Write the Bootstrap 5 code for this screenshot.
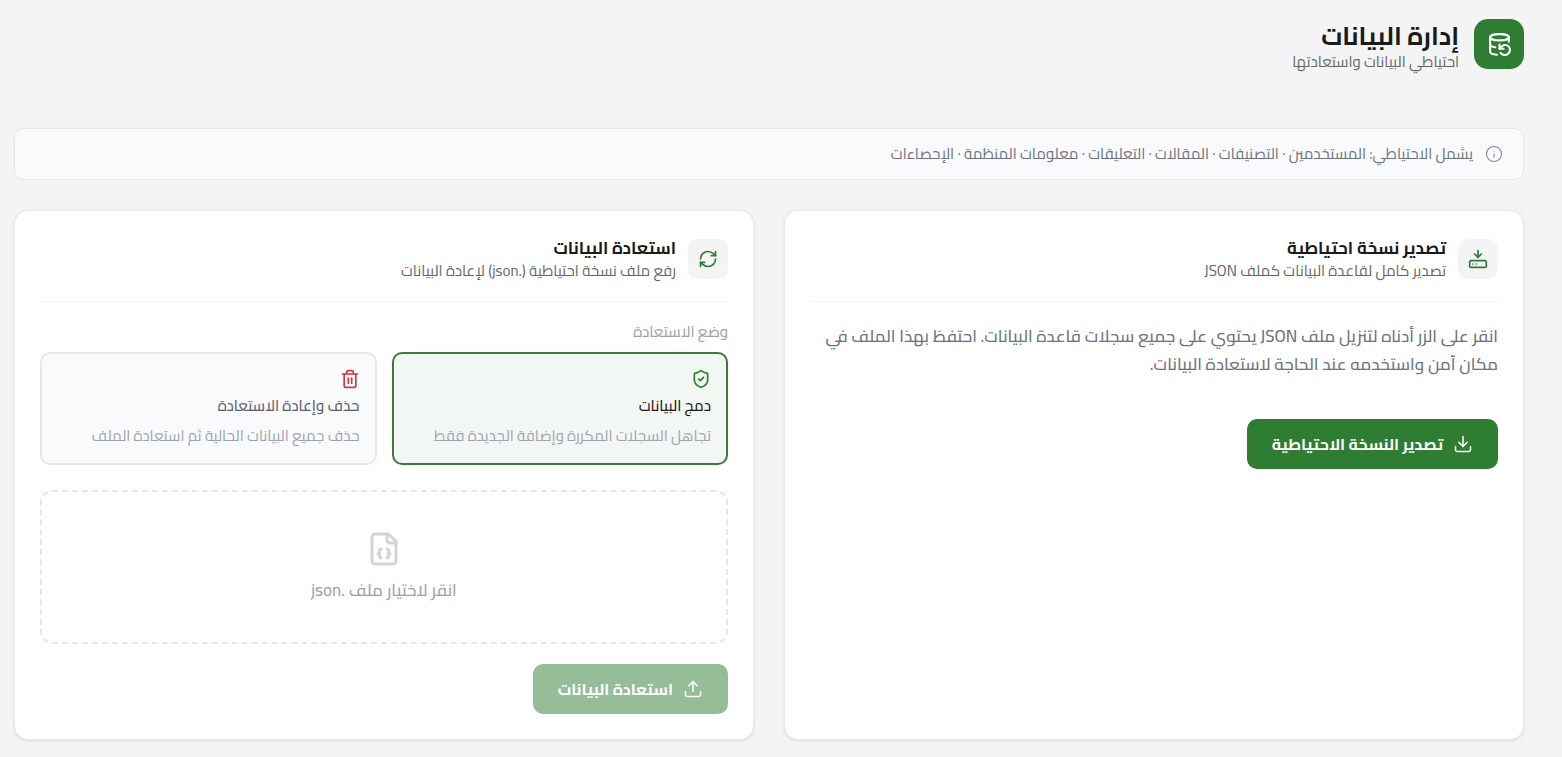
<!DOCTYPE html>
<html lang="ar" dir="rtl">
<head>
<meta charset="utf-8">
<meta name="viewport" content="width=device-width, initial-scale=1">
<title>إدارة البيانات</title>
<link href="https://cdn.jsdelivr.net/npm/bootstrap@5.3.0/dist/css/bootstrap.min.css" rel="stylesheet">
<style>
  :root { --green: #2e7d32; --ink: #1a1a1a; --soft: #6b7280; --faint: #9ca3af; --line: #e5e7eb; --pale: #f9fafb; }
  body { background: #f4f4f4; color: var(--ink); font-family: Cairo, "DejaVu Sans Condensed", "DejaVu Sans", sans-serif; font-size: 15px; line-height: 20px; }
  svg { flex: none; fill: none; stroke: currentColor; stroke-width: 2; stroke-linecap: round; stroke-linejoin: round; }
  .page { padding: 19px 38px 16px 14px; }
  .page-icon { width: 50px; height: 50px; border-radius: 14px; background: var(--green); color: #fff; }
  .page-title { font-size: 25px; line-height: 33px; font-weight: 700; }
  .page-head { margin-bottom: 56px; gap: 15px; }
  .sub { font-size: 15px; line-height: 20px; color: #666; }
  .notice { background: var(--pale); border: 1px solid var(--line); border-radius: 10px; padding: 15px 20px; margin-bottom: 30px; color: var(--soft); gap: 12px; }
  .notice svg { stroke-width: 1.5; color: #858b96; }
  .panels { display: grid; grid-template-columns: repeat(auto-fit, minmax(min(100%, 480px), 1fr)); gap: 30px; }
  .panel { border: 1px solid #e8e8e8; border-radius: 14px; padding: 25px; box-shadow: 0 1px 3px rgba(0,0,0,.1); }
  .panel-head { gap: 12px; padding-bottom: 20px; margin-bottom: 20px; border-bottom: 1px solid #f3f4f6; }
  .panel-icon { width: 40px; height: 40px; border-radius: 10px; background: #f4f4f4; color: var(--green); }
  .panel-title { font-size: 17px; line-height: 25px; font-weight: 700; }
  .intro { font-size: 17px; line-height: 28px; font-weight: 500; color: var(--soft); margin-bottom: 41px; }
  .action { --bs-btn-color: #fff; --bs-btn-bg: var(--green); --bs-btn-hover-color: #fff; --bs-btn-hover-bg: #256628; --bs-btn-active-color: #fff; --bs-btn-active-bg: #256628;
    --bs-btn-disabled-color: #fff; --bs-btn-disabled-bg: var(--green); --bs-btn-disabled-opacity: .5; --bs-btn-border-width: 0; --bs-btn-border-radius: 10px;
    --bs-btn-font-size: 16px; --bs-btn-font-weight: 700; gap: 10px; height: 50px; padding: 0 25px; }
  .action svg { stroke-width: 1.8; }
  .legend-text { font-size: 15px; line-height: 20px; font-weight: 500; color: var(--faint); margin-bottom: 10px; }
  .modes { display: grid; grid-template-columns: 1fr 1fr; gap: 15px; margin-bottom: 25px; }
  .mode { border: 2px solid var(--line); border-radius: 10px; background: var(--pale); padding: 15px; cursor: pointer; }
  .mode-name { line-height: 24px; font-weight: 500; color: #5b626e; margin-top: 5px; }
  .mode-note { line-height: 24px; color: var(--faint); margin-top: 6px; }
  .mode-merge { color: var(--green); }
  .mode-replace { color: #cf3a45; }
  .btn-check:checked + .mode { border-color: #3a7a3e; background: #f3f7f4; }
  .btn-check:checked + .mode .mode-name { color: var(--ink); }
  .drop { border: 2px dashed var(--line); border-radius: 12px; padding: 39px 20px 38px; gap: 9px; margin-bottom: 20px; color: var(--faint); font-size: 17px; line-height: 28px; font-weight: 500; cursor: pointer; }
  .drop svg { color: #d1d5db; }
</style>
</head>
<body>
<main class="page">
  <header class="page-head d-flex align-items-start">
    <div class="page-icon d-flex align-items-center justify-content-center">
      <svg width="25" height="25" viewBox="0 0 24 24" aria-hidden="true"><ellipse cx="12" cy="5" rx="9" ry="3"/><path d="M3 12a9 3 0 0 0 5 2.69"/><path d="M21 9.3V5"/><path d="M3 5v14a9 3 0 0 0 6.47 2.88"/><path d="M12 12v4h4"/><path d="M13 20a5 5 0 0 0 9-3 4.5 4.5 0 0 0-4.5-4.5c-1.33 0-2.54.54-3.41 1.41L12 16"/></svg>
    </div>
    <div>
      <h1 class="page-title mb-0">إدارة البيانات</h1>
      <p class="sub mb-0">احتياطي البيانات واستعادتها</p>
    </div>
  </header>

  <div class="notice d-flex align-items-center">
    <svg width="18" height="18" viewBox="0 0 24 24" aria-hidden="true"><circle cx="12" cy="12" r="10"/><path d="M12 16v-4"/><path d="M12 8h.01"/></svg>
    <span>يشمل الاحتياطي: المستخدمين · التصنيفات · المقالات · التعليقات · معلومات المنظمة · الإحصاءات</span>
  </div>

  <div class="panels">
    <section class="panel bg-white">
      <div class="panel-head d-flex align-items-start">
        <div class="panel-icon d-flex align-items-center justify-content-center align-self-center">
          <svg width="20" height="20" viewBox="0 0 24 24" aria-hidden="true"><path d="M12 2v8"/><path d="m16 6-4 4-4-4"/><rect width="20" height="8" x="2" y="14" rx="2"/><path d="M6 18h.01"/><path d="M10 18h.01"/></svg>
        </div>
        <div>
          <h2 class="panel-title mb-0">تصدير نسخة احتياطية</h2>
          <p class="sub mb-0">تصدير كامل لقاعدة البيانات كملف JSON</p>
        </div>
      </div>
      <p class="intro">انقر على الزر أدناه لتنزيل ملف JSON يحتوي على جميع سجلات قاعدة البيانات. احتفظ بهذا الملف في مكان آمن واستخدمه عند الحاجة لاستعادة البيانات.</p>
      <button type="button" class="btn action d-inline-flex align-items-center">
        <svg width="20" height="20" viewBox="0 0 24 24" aria-hidden="true"><path d="M21 15v4a2 2 0 0 1-2 2H5a2 2 0 0 1-2-2v-4"/><path d="m7 10 5 5 5-5"/><path d="M12 15V3"/></svg>
        <span>تصدير النسخة الاحتياطية</span>
      </button>
    </section>

    <section class="panel bg-white">
      <div class="panel-head d-flex align-items-start">
        <div class="panel-icon d-flex align-items-center justify-content-center align-self-center">
          <svg width="20" height="20" viewBox="0 0 24 24" aria-hidden="true"><path d="M3 12a9 9 0 0 1 9-9 9.75 9.75 0 0 1 6.74 2.74L21 8"/><path d="M21 3v5h-5"/><path d="M21 12a9 9 0 0 1-9 9 9.75 9.75 0 0 1-6.74-2.74L3 16"/><path d="M8 16H3v5"/></svg>
        </div>
        <div>
          <h2 class="panel-title mb-0">استعادة البيانات</h2>
          <p class="sub mb-0">رفع ملف نسخة احتياطية (.json) لإعادة البيانات</p>
        </div>
      </div>
      <form>
        <fieldset>
          <legend class="legend-text">وضع الاستعادة</legend>
          <div class="modes">
            <input class="btn-check" type="radio" name="mode" id="merge" checked>
            <label class="mode" for="merge">
              <svg class="mode-merge d-block" width="20" height="20" viewBox="0 0 24 24" aria-hidden="true"><path d="M20 13c0 5-3.500 7.500-7.660 8.950a1 1 0 0 1-.67-.01C7.500 20.500 4 18 4 13V6a1 1 0 0 1 1-1c2 0 4.500-1.200 6.240-2.720a1.170 1.170 0 0 1 1.520 0C14.510 3.810 17 5 19 5a1 1 0 0 1 1 1z"/><path d="m9 12 2 2 4-4"/></svg>
              <span class="mode-name d-block">دمج البيانات</span>
              <span class="mode-note d-block">تجاهل السجلات المكررة وإضافة الجديدة فقط</span>
            </label>
            <input class="btn-check" type="radio" name="mode" id="replace">
            <label class="mode" for="replace">
              <svg class="mode-replace d-block" width="20" height="20" viewBox="0 0 24 24" aria-hidden="true"><path d="M3 6h18"/><path d="M19 6v14a2 2 0 0 1-2 2H7a2 2 0 0 1-2-2V6"/><path d="M8 6V4a2 2 0 0 1 2-2h4a2 2 0 0 1 2 2v2"/><path d="M10 11v6"/><path d="M14 11v6"/></svg>
              <span class="mode-name d-block">حذف وإعادة الاستعادة</span>
              <span class="mode-note d-block">حذف جميع البيانات الحالية ثم استعادة الملف</span>
            </label>
          </div>
        </fieldset>
        <input class="visually-hidden" type="file" id="backup" accept=".json">
        <label class="drop d-flex flex-column align-items-center" for="backup">
          <svg width="36" height="36" viewBox="0 0 24 24" aria-hidden="true"><path d="M15 2H6a2 2 0 0 0-2 2v16a2 2 0 0 0 2 2h12a2 2 0 0 0 2-2V7Z"/><path d="M14 2v4a2 2 0 0 0 2 2h4"/><path d="M10 12a1 1 0 0 0-1 1v1a1 1 0 0 1-1 1 1 1 0 0 1 1 1v1a1 1 0 0 0 1 1"/><path d="M14 18a1 1 0 0 0 1-1v-1a1 1 0 0 1 1-1 1 1 0 0 1-1-1v-1a1 1 0 0 0-1-1"/></svg>
          <span>انقر لاختيار ملف .json</span>
        </label>
        <button type="submit" class="btn action d-inline-flex align-items-center" disabled>
          <svg width="20" height="20" viewBox="0 0 24 24" aria-hidden="true"><path d="M21 15v4a2 2 0 0 1-2 2H5a2 2 0 0 1-2-2v-4"/><path d="m17 8-5-5-5 5"/><path d="M12 3v12"/></svg>
          <span>استعادة البيانات</span>
        </button>
      </form>
    </section>
  </div>
</main>
<script src="https://cdn.jsdelivr.net/npm/bootstrap@5.3.0/dist/js/bootstrap.bundle.min.js"></script>
</body>
</html>
